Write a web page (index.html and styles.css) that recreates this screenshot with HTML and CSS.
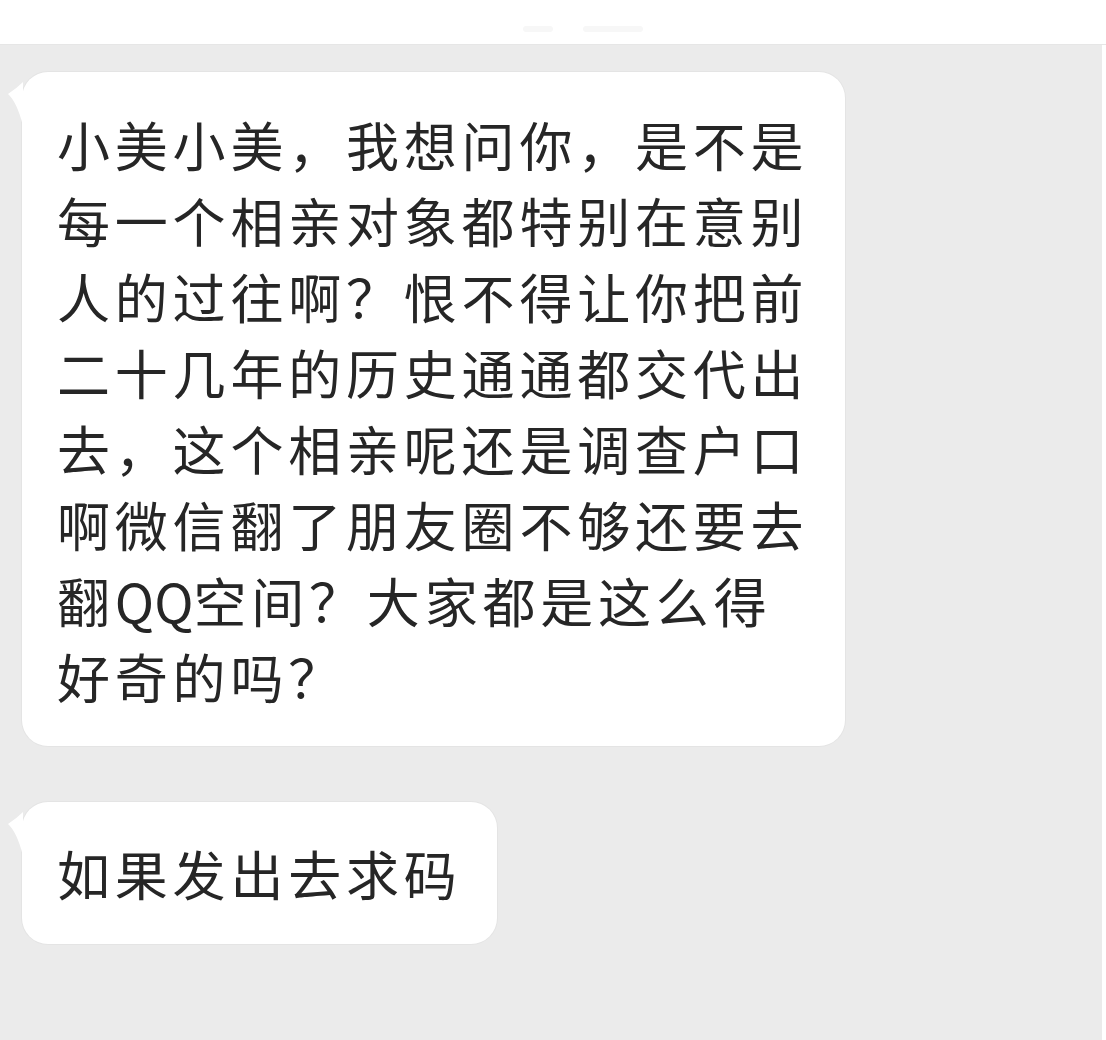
FILE: index.html
```html
<!DOCTYPE html>
<html lang="zh-CN">
<head>
<meta charset="utf-8">
<title>聊天</title>
<link rel="stylesheet" href="styles.css">
</head>
<body>
<div class="screen">
  <header class="topbar">
    <div class="title-ghost"><span class="g1"></span><span class="g2"></span></div>
  </header>
  <div class="body-row">
    <main class="chat">
      <div class="msg">
        <div class="bubble bubble-long">
          <svg class="tail" width="20" height="50" viewBox="0 0 20 50"><path d="M16 0 Q10 6 1 12 Q10 20 16 44 Z" fill="#fff"/></svg>
          <p class="text">小美小美，我想问你，是不是<br>每一个相亲对象都特别在意别<br>人的过往啊？恨不得让你把前<br>二十几年的历史通通都交代出<br>去，这个相亲呢还是调查户口<br>啊微信翻了朋友圈不够还要去<br>翻<span class="latin">QQ</span>空间？大家都是这么得<br>好奇的吗？</p>
        </div>
      </div>
      <div class="msg">
        <div class="bubble bubble-short">
          <svg class="tail" width="20" height="50" viewBox="0 0 20 50"><path d="M16 0 Q10 6 1 12 Q10 20 16 44 Z" fill="#fff"/></svg>
          <p class="text">如果发出去求码</p>
        </div>
      </div>
    </main>
    <div class="edge"></div>
  </div>
</div>
</body>
</html>
```

FILE: styles.css
```css
html, body {
  margin: 0;
  padding: 0;
}
body {
  background: #ebebeb;
  font-family: "Noto Sans CJK SC", "Noto Sans", sans-serif;
  color: #262626;
}
.screen {
  width: 1106px;
  height: 1040px;
  display: flex;
  flex-direction: column;
  overflow: hidden;
}
.topbar {
  height: 45px;
  background: #ffffff;
  border-bottom: 1px solid #e6e6e6;
  box-sizing: border-box;
  display: flex;
  justify-content: center;
  align-items: flex-end;
  flex: none;
}
.title-ghost {
  display: flex;
  gap: 30px;
  margin-left: 60px;
  margin-bottom: 12px;
}
.title-ghost .g1, .title-ghost .g2 {
  display: block;
  height: 6px;
  background: #f7f7f7;
  border-radius: 3px;
}
.title-ghost .g1 { width: 30px; }
.title-ghost .g2 { width: 60px; }
.body-row {
  flex: 1;
  display: flex;
}
.chat {
  flex: 1;
  display: flex;
  flex-direction: column;
  align-items: flex-start;
  gap: 56px;
  padding: 27px 0 0 22px;
}
.edge {
  width: 4px;
  background: #ffffff;
}
.bubble {
  position: relative;
  background: #ffffff;
  border-radius: 26px;
  box-shadow: 0 0 0 1px #e4e4e4;
  box-sizing: border-box;
}
.bubble-long {
  width: 823px;
  padding: 34px 20px 32px 35px;
}
.bubble-short {
  width: 475px;
  padding: 33px 20px 33px 35px;
}
.tail {
  position: absolute;
  left: -15px;
  top: 10px;
}
.text {
  margin: 0;
  font-size: 53px;
  line-height: 76px;
  letter-spacing: 4.8px;
  font-weight: 400;
  white-space: nowrap;
}
.latin {
  letter-spacing: 0;
}
```
